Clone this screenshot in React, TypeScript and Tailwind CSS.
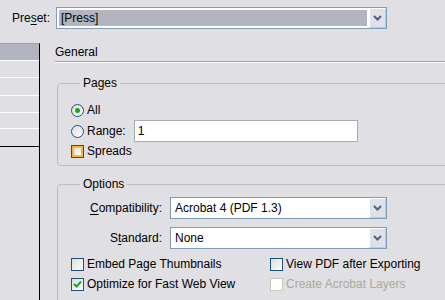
import React from 'react';

function Chevron() {
  return (
    <svg width="9" height="6" viewBox="0 0 9 6">
      <path d="M1 1 L4.5 4.5 L8 1" fill="none" stroke="#4d6185" strokeWidth="2" />
    </svg>
  );
}

function DropButton() {
  return (
    <div className="w-[17px] self-stretch flex items-center justify-center bg-[#dfe1ea] border border-white border-r-[#c3c8d6] border-b-[#c3c8d6]">
      <Chevron />
    </div>
  );
}

function Select({ value, highlight = false, width }: { value: string; highlight?: boolean; width: string }) {
  return (
    <div className={`${width} h-[22px] flex border border-[#7f9db9] bg-white`}>
      <div className="flex-1 p-[2px] flex">
        <div className={`flex-1 flex items-center pl-[2px] ${highlight ? 'bg-[#b2b4bf]' : ''}`}>{value}</div>
      </div>
      <DropButton />
    </div>
  );
}

function Radio({ checked = false }: { checked?: boolean }) {
  return (
    <div className="w-[13px] h-[13px] rounded-full border border-[#1c5180] bg-gradient-to-br from-[#dcdcd7] to-white flex items-center justify-center shrink-0">
      {checked && <div className="w-[5px] h-[5px] rounded-full bg-[#21a121]" />}
    </div>
  );
}

function Check({ checked = false, hover = false, disabled = false }: { checked?: boolean; hover?: boolean; disabled?: boolean }) {
  if (hover) {
    return (
      <div className="w-[13px] h-[13px] border border-[#1c5180] shrink-0">
        <div className="w-full h-full border-2 border-[#f8b33a] bg-gradient-to-br from-[#dcdcd7] to-white" />
      </div>
    );
  }
  const border = disabled
    ? 'border-[#c9c7ba] bg-white'
    : 'border-[#1c5180] bg-gradient-to-br from-[#dcdcd7] to-white';
  return (
    <div className={`w-[13px] h-[13px] border ${border} flex items-center justify-center shrink-0`}>
      {checked && (
        <svg width="9" height="9" viewBox="0 0 9 9">
          <path d="M1 4 L3.5 6.5 L8 1.5" fill="none" stroke="#21a121" strokeWidth="2" />
        </svg>
      )}
    </div>
  );
}

function U({ children }: { children: React.ReactNode }) {
  return <span className="underline underline-offset-2">{children}</span>;
}

export default function App() {
  return (
    <div className="w-[445px] h-[300px] overflow-hidden bg-[#e0dfe3] text-black text-[12px] leading-[14px] font-['Liberation_Sans',Arial,sans-serif]">
      {/* preset row */}
      <div className="flex items-center pt-[7px] pl-[12px]">
        <span className="w-[44px]">Pre<U>s</U>et:</span>
        <Select value="[Press]" highlight width="w-[331px]" />
      </div>

      <div className="flex mt-[14px]">
        {/* left list */}
        <div className="w-[40px] shrink-0 border-t border-[#a0a0a0] border-r border-r-black h-[260px]">
          <div className="h-[103px] border-b border-black">
            <div className="h-[17px] bg-[#b2b4bf] border-b border-white" />
            <div className="h-[17px] border-b border-white" />
            <div className="h-[18px] border-b border-white" />
            <div className="h-[17px] border-b border-white" />
            <div className="h-[16px] border-b border-white" />
          </div>
        </div>

        {/* right side */}
        <div className="ml-[15px] w-[420px] shrink-0">
          <div className="h-[18px] flex items-center">General</div>
          <div className="border-t border-[#a0a0a0] border-b border-b-white" />

          <fieldset className="ml-[2px] mt-[13px] border border-[#bcbcc4] rounded-[4px] h-[90px] pl-[13px]">
            <legend className="ml-[9px] px-[3px]">Pages</legend>
            <div className="flex items-center gap-[3px] h-[18px] mt-[11px]">
              <Radio checked />
              <span>All</span>
            </div>
            <div className="flex items-center gap-[3px] h-[22px] mt-[1px]">
              <Radio />
              <span>Range:</span>
              <div className="ml-[5px] w-[224px] h-[22px] border border-[#a5acb5] bg-white flex items-center pl-[3px]">1</div>
            </div>
            <div className="flex items-center gap-[3px] h-[18px]">
              <Check hover />
              <span>Spreads</span>
            </div>
          </fieldset>

          <fieldset className="ml-[2px] mt-[11px] border border-[#bcbcc4] rounded-[4px] h-[140px] pl-[13px]">
            <legend className="ml-[9px] px-[3px]">Options</legend>
            <div className="flex items-center h-[22px] mt-[6px] -ml-[13px]">
              <span className="w-[104px] text-right"><U>C</U>ompatibility:</span>
              <div className="ml-[8px]">
                <Select value="Acrobat 4 (PDF 1.3)" width="w-[217px]" />
              </div>
            </div>
            <div className="flex items-center h-[22px] mt-[8px] -ml-[13px]">
              <span className="w-[104px] text-right">S<U>t</U>andard:</span>
              <div className="ml-[8px]">
                <Select value="None" width="w-[217px]" />
              </div>
            </div>
            <div className="flex items-center h-[18px] mt-[6px]">
              <div className="w-[199px] flex items-center gap-[3px]">
                <Check />
                <span>Embed Page Thumbnails</span>
              </div>
              <div className="flex items-center gap-[3px]">
                <Check />
                <span>View PDF after Exporting</span>
              </div>
            </div>
            <div className="flex items-center h-[18px] mt-[2px]">
              <div className="w-[199px] flex items-center gap-[3px]">
                <Check checked />
                <span>Optimize for Fast Web View</span>
              </div>
              <div className="flex items-center gap-[3px] text-[#aca899]">
                <Check disabled />
                <span>Create Acrobat Layers</span>
              </div>
            </div>
          </fieldset>
        </div>
      </div>
    </div>
  );
}
